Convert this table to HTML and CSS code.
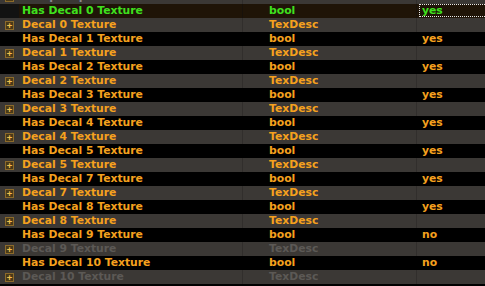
FILE: index.html
```html
<!DOCTYPE html>
<html>
<head>
<meta charset="utf-8">
<link rel="stylesheet" href="styles.css">
</head>
<body>
<div class="grid">
  <div class="row odd dim0"><span class="exp"><i class="box">+</i></span><span class="c name">Bump Map Texture</span><span class="c type">TexDesc</span><span class="c val"></span></div>
  <div class="row sel"><span class="exp"></span><span class="c name">Has Decal 0 Texture</span><span class="c type">bool</span><span class="c val"><b class="focus">yes</b></span></div>
  <div class="row odd"><span class="exp"><i class="box">+</i></span><span class="c name">Decal 0 Texture</span><span class="c type">TexDesc</span><span class="c val"></span></div>
  <div class="row"><span class="exp"></span><span class="c name">Has Decal 1 Texture</span><span class="c type">bool</span><span class="c val">yes</span></div>
  <div class="row odd"><span class="exp"><i class="box">+</i></span><span class="c name">Decal 1 Texture</span><span class="c type">TexDesc</span><span class="c val"></span></div>
  <div class="row"><span class="exp"></span><span class="c name">Has Decal 2 Texture</span><span class="c type">bool</span><span class="c val">yes</span></div>
  <div class="row odd"><span class="exp"><i class="box">+</i></span><span class="c name">Decal 2 Texture</span><span class="c type">TexDesc</span><span class="c val"></span></div>
  <div class="row"><span class="exp"></span><span class="c name">Has Decal 3 Texture</span><span class="c type">bool</span><span class="c val">yes</span></div>
  <div class="row odd"><span class="exp"><i class="box">+</i></span><span class="c name">Decal 3 Texture</span><span class="c type">TexDesc</span><span class="c val"></span></div>
  <div class="row"><span class="exp"></span><span class="c name">Has Decal 4 Texture</span><span class="c type">bool</span><span class="c val">yes</span></div>
  <div class="row odd"><span class="exp"><i class="box">+</i></span><span class="c name">Decal 4 Texture</span><span class="c type">TexDesc</span><span class="c val"></span></div>
  <div class="row"><span class="exp"></span><span class="c name">Has Decal 5 Texture</span><span class="c type">bool</span><span class="c val">yes</span></div>
  <div class="row odd"><span class="exp"><i class="box">+</i></span><span class="c name">Decal 5 Texture</span><span class="c type">TexDesc</span><span class="c val"></span></div>
  <div class="row"><span class="exp"></span><span class="c name">Has Decal 7 Texture</span><span class="c type">bool</span><span class="c val">yes</span></div>
  <div class="row odd"><span class="exp"><i class="box">+</i></span><span class="c name">Decal 7 Texture</span><span class="c type">TexDesc</span><span class="c val"></span></div>
  <div class="row"><span class="exp"></span><span class="c name">Has Decal 8 Texture</span><span class="c type">bool</span><span class="c val">yes</span></div>
  <div class="row odd"><span class="exp"><i class="box">+</i></span><span class="c name">Decal 8 Texture</span><span class="c type">TexDesc</span><span class="c val"></span></div>
  <div class="row"><span class="exp"></span><span class="c name">Has Decal 9 Texture</span><span class="c type">bool</span><span class="c val">no</span></div>
  <div class="row odd dis"><span class="exp"><i class="box">+</i></span><span class="c name">Decal 9 Texture</span><span class="c type">TexDesc</span><span class="c val"></span></div>
  <div class="row"><span class="exp"></span><span class="c name">Has Decal 10 Texture</span><span class="c type">bool</span><span class="c val">no</span></div>
  <div class="row odd dis"><span class="exp"><i class="box">+</i></span><span class="c name">Decal 10 Texture</span><span class="c type">TexDesc</span><span class="c val"></span></div>
  <div class="row"><span class="exp"></span><span class="c name"></span><span class="c type"></span><span class="c val"></span></div>
</div>
</body>
</html>
```

FILE: styles.css
```css
html, body {
  margin: 0;
  padding: 0;
  background: #000;
  overflow: hidden;
}
.grid {
  margin-top: -10px;
  display: flex;
  flex-direction: column;
  font-family: "DejaVu Sans", Verdana, sans-serif;
  font-weight: bold;
  font-size: 10.8px;
  color: #f5a11e;
}
.row {
  display: grid;
  grid-template-columns: 19px 223px 174px 1fr;
  height: 14px;
  line-height: 14px;
  background: #000;
}
.row.odd {
  background: #3b3835;
}
.row.sel {
  background: linear-gradient(to right, #121212 0 19px, #1f1407 19px);
  color: #3fe01e;
}
.row.dis {
  color: #5c5955;
}
.row.dim0 {
  color: #8a8790;
}
.c {
  white-space: nowrap;
  overflow: hidden;
}
.name {
  padding-left: 3px;
}
.type {
  padding-left: 26px;
  border-left: 1px solid transparent;
}
.val {
  padding-left: 5px;
  border-left: 1px solid transparent;
}
.row.odd .type, .row.odd .val {
  border-left-color: #312e2c;
}
.row.sel .type, .row.sel .val {
  border-left-color: #18110a;
}
.exp {
  display: flex;
  align-items: center;
  padding-left: 5px;
}
.box {
  box-sizing: border-box;
  width: 9px;
  height: 9px;
  border: 1px solid #8c6a2a;
  background: #4a3a18;
  color: #f0c050;
  font-style: normal;
  font-family: "DejaVu Sans Mono", monospace;
  font-size: 9px;
  line-height: 7px;
  text-align: center;
  font-weight: bold;
}
.focus {
  display: block;
  margin-left: -3px;
  padding-left: 2px;
  height: 13px;
  line-height: 12px;
  border: 1px dotted #e8e8e8;
  border-right: none;
  box-sizing: border-box;
  font-weight: bold;
}
```
